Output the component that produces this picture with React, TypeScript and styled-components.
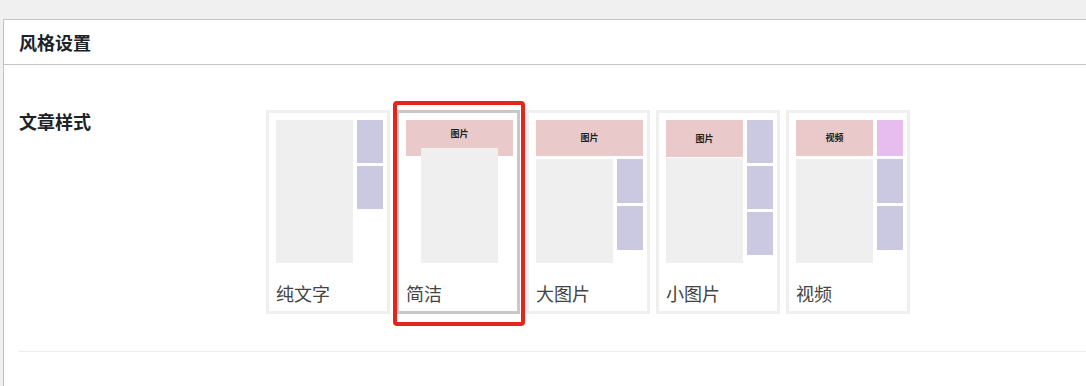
import * as React from 'react'
import styled, { createGlobalStyle } from 'styled-components'

const GlobalStyle = createGlobalStyle`
  html, body {
    margin: 0;
    padding: 0;
    overflow: hidden;
    background: #f0f0f1;
    font-family: 'Noto Sans CJK SC', 'Noto Sans', sans-serif;
  }
`

const Page = styled.div`
  padding: 19px 0 0 3px;
`

const Panel = styled.div`
  width: 1100px;
  height: 367px;
  box-sizing: border-box;
  background: #fff;
  border: 1px solid #c3c4c7;
  border-right: none;
  border-bottom: none;
`

const PanelHeader = styled.div`
  height: 44px;
  display: flex;
  align-items: center;
  padding: 0 15px;
  border-bottom: 1px solid #c3c4c7;
`

const Title = styled.h2`
  margin: 0;
  font-size: 18px;
  font-weight: 700;
  color: #1d2327;
`

const PanelBody = styled.div`
  padding: 0 0 0 15px;
`

const FieldRow = styled.div`
  display: flex;
  align-items: flex-start;
  padding: 45px 0 37px;
  border-bottom: 1px solid #ececec;
`

const FieldLabel = styled.div`
  width: 247px;
  flex-shrink: 0;
  font-size: 18px;
  font-weight: 700;
  line-height: 22px;
  color: #1d2327;
`

const Options = styled.div`
  display: flex;
  gap: 6px;
`

const Card = styled.label<{ $selected?: boolean }>`
  position: relative;
  width: 124px;
  box-sizing: border-box;
  padding: 7px 4px 6px 7px;
  border: 3px solid ${p => (p.$selected ? '#c8c8c8' : '#efefef')};
  background: #fff;
  cursor: pointer;
`

const Highlight = styled.span`
  position: absolute;
  top: -12px;
  left: -6px;
  right: -8px;
  bottom: -15px;
  border: 4px solid #e2261d;
  border-radius: 4px;
  pointer-events: none;
`

const Preview = styled.div`
  width: 107px;
  height: 143px;
  display: flex;
  flex-direction: column;
  gap: 3px;
`

const Split = styled.div`
  flex: 1;
  display: flex;
  gap: 4px;
  min-height: 0;
`

const Col = styled.div<{ $w: number; $gap?: number }>`
  width: ${p => p.$w}px;
  display: flex;
  flex-direction: column;
  gap: ${p => p.$gap ?? 3}px;
`

const tones = {
  gray: '#efefef',
  purple: '#cbc8e2',
  pink: '#e9c9c9',
  violet: '#e7bdf0',
}

const Block = styled.div<{ $tone: keyof typeof tones; $h?: number; $top?: boolean }>`
  background: ${p => tones[p.$tone]};
  ${p => (p.$h ? `height: ${p.$h}px; flex-shrink: 0;` : 'flex: 1;')}
  display: flex;
  justify-content: center;
  align-items: ${p => (p.$top ? 'flex-start' : 'center')};
  padding-top: ${p => (p.$top ? '9px' : '0')};
  box-sizing: border-box;
  font-size: 9px;
  font-weight: 700;
  color: #222;
  line-height: 10px;
`

const Overlap = styled(Block)`
  align-self: center;
  width: 77px;
  margin-top: -11px;
`

const Caption = styled.div`
  margin-top: 20px;
  font-size: 18px;
  line-height: 20px;
  padding-bottom: 2px;
  color: #444;
`

export default function App() {
  return (
    <>
      <GlobalStyle />
      <Page>
        <Panel>
          <PanelHeader>
            <Title>风格设置</Title>
          </PanelHeader>
          <PanelBody>
            <FieldRow>
              <FieldLabel>文章样式</FieldLabel>
              <Options>
                <Card>
                  <Preview>
                    <Split>
                      <Col $w={77}>
                        <Block $tone="gray" />
                      </Col>
                      <Col $w={26}>
                        <Block $tone="purple" $h={43} />
                        <Block $tone="purple" $h={43} />
                      </Col>
                    </Split>
                  </Preview>
                  <Caption>纯文字</Caption>
                </Card>

                <Card $selected>
                  <Highlight />
                  <Preview>
                    <Block $tone="pink" $h={36} $top>图片</Block>
                    <Overlap $tone="gray" />
                  </Preview>
                  <Caption>简洁</Caption>
                </Card>

                <Card>
                  <Preview>
                    <Block $tone="pink" $h={36}>图片</Block>
                    <Split>
                      <Col $w={77}>
                        <Block $tone="gray" />
                      </Col>
                      <Col $w={26}>
                        <Block $tone="purple" $h={44} />
                        <Block $tone="purple" $h={44} />
                      </Col>
                    </Split>
                  </Preview>
                  <Caption>大图片</Caption>
                </Card>

                <Card>
                  <Preview>
                    <Split>
                      <Col $w={77} $gap={1}>
                        <Block $tone="pink" $h={37}>图片</Block>
                        <Block $tone="gray" />
                      </Col>
                      <Col $w={26}>
                        <Block $tone="purple" $h={43} />
                        <Block $tone="purple" $h={43} />
                        <Block $tone="purple" $h={43} />
                      </Col>
                    </Split>
                  </Preview>
                  <Caption>小图片</Caption>
                </Card>

                <Card>
                  <Preview>
                    <Split>
                      <Col $w={77}>
                        <Block $tone="pink" $h={36}>视频</Block>
                        <Block $tone="gray" />
                      </Col>
                      <Col $w={26}>
                        <Block $tone="violet" $h={36} />
                        <Block $tone="purple" $h={44} />
                        <Block $tone="purple" $h={44} />
                      </Col>
                    </Split>
                  </Preview>
                  <Caption>视频</Caption>
                </Card>
              </Options>
            </FieldRow>
          </PanelBody>
        </Panel>
      </Page>
    </>
  )
}
